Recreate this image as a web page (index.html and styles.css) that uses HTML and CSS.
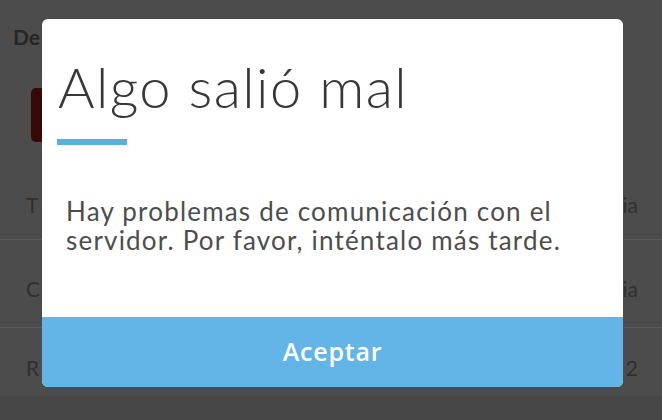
FILE: index.html
```html
<!DOCTYPE html>
<html lang="es">
<head>
<meta charset="utf-8">
<title>Algo salió mal</title>
<link rel="stylesheet" href="styles.css">
</head>
<body>
<div class="page">
  <div class="header">De</div>
  <div class="action"></div>
  <div class="rows">
    <div class="row r1"><span>T</span><span>ia</span></div>
    <div class="row r2"><span>C</span><span>ia</span></div>
    <div class="row r3"><span>R</span><span>2</span></div>
  </div>
  <div class="footer"></div>
</div>
<div class="overlay">
  <div class="modal">
    <div class="modal-body">
      <h1 class="title">Algo salió mal</h1>
      <div class="accent"></div>
      <p class="message">Hay problemas de comunicación con el servidor. Por favor, inténtalo más tarde.</p>
    </div>
    <div class="modal-button">Aceptar</div>
  </div>
</div>
</body>
</html>
```
FILE: styles.css
```css
html, body {
  margin: 0;
  padding: 0;
  width: 662px;
  height: 420px;
  overflow: hidden;
  background: #4c4c4c;
  font-family: Lato, "Open Sans", "Liberation Sans", sans-serif;
}
.page {
  display: flex;
  flex-direction: column;
  height: 420px;
}
.header {
  padding: 24px 0 0 13px;
  height: 40px;
  font-size: 21px;
  font-weight: 700;
  color: #262626;
}
.action {
  margin: 24px 60px 0 31px;
  height: 54px;
  border-radius: 5px;
  background: #380909;
}
.rows {
  margin-top: 18px;
  display: flex;
  flex-direction: column;
}
.row {
  display: flex;
  justify-content: space-between;
  align-items: center;
  padding: 10px 24px 0 26px;
  font-size: 21px;
  color: #303030;
  box-sizing: border-box;
  border-bottom: 1px solid #585858;
}
.r1 { height: 80px; }
.r2 { height: 88px; }
.r3 { height: 68px; border-bottom: none; }
.footer {
  flex: 1;
  background: #464646;
}
.overlay {
  position: absolute;
  left: 42px;
  top: 19px;
}
.modal {
  width: 581px;
  height: 368px;
  border-radius: 6px;
  background: #ffffff;
  display: flex;
  flex-direction: column;
  overflow: hidden;
}
.modal-body {
  flex: 1;
  padding: 0 16px;
}
.title {
  margin: 35px 0 0 0;
  font-size: 56px;
  line-height: 66px;
  font-weight: 300;
  color: #383838;
  letter-spacing: 1.4px;
}
.accent {
  margin-top: 19px;
  width: 70px;
  height: 6px;
  margin-left: -1px;
  background: #5aafe2;
}
.message {
  margin: 52px 0 0 8px;
  font-size: 26px;
  line-height: 29px;
  color: #4d4d4d;
  font-weight: 400;
  letter-spacing: 1.2px;
}
.modal-button {
  height: 70px;
  background: #62b5e6;
  color: #ffffff;
  font-family: "Open Sans", Lato, sans-serif;
  font-size: 25px;
  font-weight: 600;
  letter-spacing: 0.8px;
  display: flex;
  align-items: center;
  justify-content: center;
  padding-bottom: 2px;
  box-sizing: border-box;
}
```
